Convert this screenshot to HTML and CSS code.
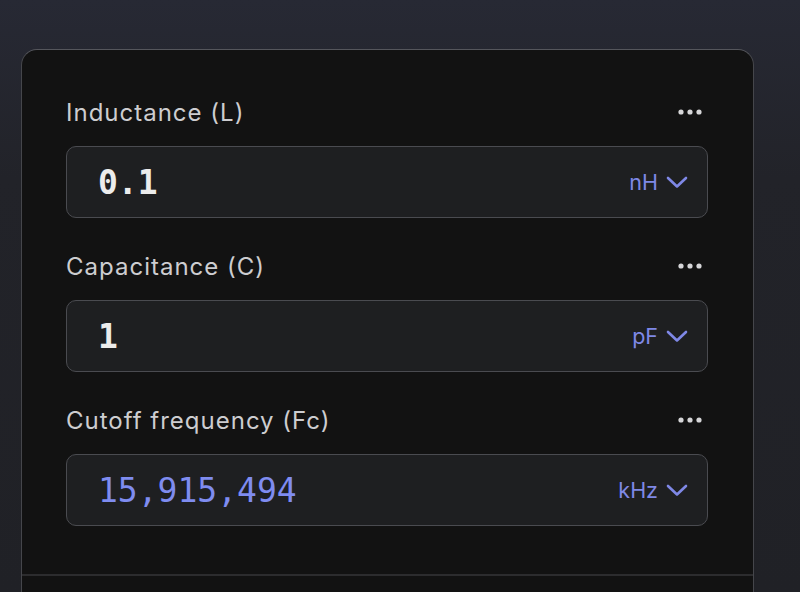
FILE: index.html
```html
<!DOCTYPE html>
<html>
  <head>
    <meta charset="utf-8" />
    <title>LC filter calculator</title>
    <link rel="stylesheet" href="styles.css">
  </head>

  <body>
    <div class="page">
      <section class="calc">
        <div class="fields">
          <div class="field">
            <div class="field-head">
              <label for="ind">Inductance (L)</label>
              <button class="more" type="button" aria-label="More options">
                <svg width="24" height="6" viewBox="0 0 24 6"><circle cx="3" cy="3" r="2.6"/><circle cx="12" cy="3" r="2.6"/><circle cx="21" cy="3" r="2.6"/></svg>
              </button>
            </div>
            <div class="box">
              <input class="value" type="text" id="ind" value="0.1" />
              <span class="unit">nH
                <svg width="22" height="13" viewBox="0 0 22 13"><path d="M2 2l9 8.5L20 2"/></svg>
              </span>
            </div>
          </div>

          <div class="field">
            <div class="field-head">
              <label for="cap">Capacitance (C)</label>
              <button class="more" type="button" aria-label="More options">
                <svg width="24" height="6" viewBox="0 0 24 6"><circle cx="3" cy="3" r="2.6"/><circle cx="12" cy="3" r="2.6"/><circle cx="21" cy="3" r="2.6"/></svg>
              </button>
            </div>
            <div class="box">
              <input class="value" type="text" id="cap" value="1" />
              <span class="unit">pF
                <svg width="22" height="13" viewBox="0 0 22 13"><path d="M2 2l9 8.5L20 2"/></svg>
              </span>
            </div>
          </div>

          <div class="field">
            <div class="field-head">
              <label for="fc">Cutoff frequency (Fc)</label>
              <button class="more" type="button" aria-label="More options">
                <svg width="24" height="6" viewBox="0 0 24 6"><circle cx="3" cy="3" r="2.6"/><circle cx="12" cy="3" r="2.6"/><circle cx="21" cy="3" r="2.6"/></svg>
              </button>
            </div>
            <div class="box">
              <input class="value result" type="text" id="fc" value="15,915,494" readonly />
              <span class="unit">kHz
                <svg width="22" height="13" viewBox="0 0 22 13"><path d="M2 2l9 8.5L20 2"/></svg>
              </span>
            </div>
          </div>
        </div>
        <div class="calc-foot"></div>
      </section>
    </div>
  </body>
</html>
```

FILE: styles.css
```css
body {
  margin: 0;
  height: 592px;
  overflow: hidden;
  font-family: "Inter", "Noto Sans", sans-serif;
  background: linear-gradient(#272934, #222329 30%, #202126);
}

.page {
  padding: 49px 0 0 21px;
}

.calc {
  width: 731px;
  height: 560px;
  background-color: #121212;
  border: 1px solid #45464b;
  border-top-color: #55565c;
  border-radius: 16px;
  box-sizing: content-box;
}

.fields {
  display: flex;
  flex-direction: column;
  gap: 32px;
  padding: 46px 45px 48px 44px;
}

.field-head {
  display: flex;
  align-items: center;
  justify-content: space-between;
  height: 32px;
  margin-bottom: 18px;
}

.field-head label {
  font-size: 24px;
  color: #cdcdd0;
  letter-spacing: 1px;
}

.more {
  padding: 0;
  margin-right: 6px;
  border: none;
  background: none;
  fill: #d6d6d8;
  display: flex;
}

/* input shell with the unit picker on the right */
.box {
  display: flex;
  align-items: center;
  height: 72px;
  box-sizing: border-box;
  padding: 0 19px 0 31px;
  background-color: #1e1f21;
  border: 1px solid #4a4b50;
  border-radius: 10px;
}

.value {
  flex: 1;
  min-width: 0;
  padding: 0;
  border: none;
  outline: none;
  background: none;
  font-family: "DejaVu Sans Mono", monospace;
  font-weight: bold;
  font-size: 33px;
  color: #ececec;
}

.value.result {
  color: #7f8cf0;
  font-weight: normal;
}

.unit {
  display: flex;
  align-items: center;
  gap: 8px;
  font-size: 21.5px;
  color: #7f88e6;
}

.unit svg {
  fill: none;
  stroke: #7f88e6;
  stroke-width: 2.6;
  stroke-linecap: round;
  stroke-linejoin: round;
}

.calc-foot {
  border-top: 2px solid #2c2c2e;
}
```
